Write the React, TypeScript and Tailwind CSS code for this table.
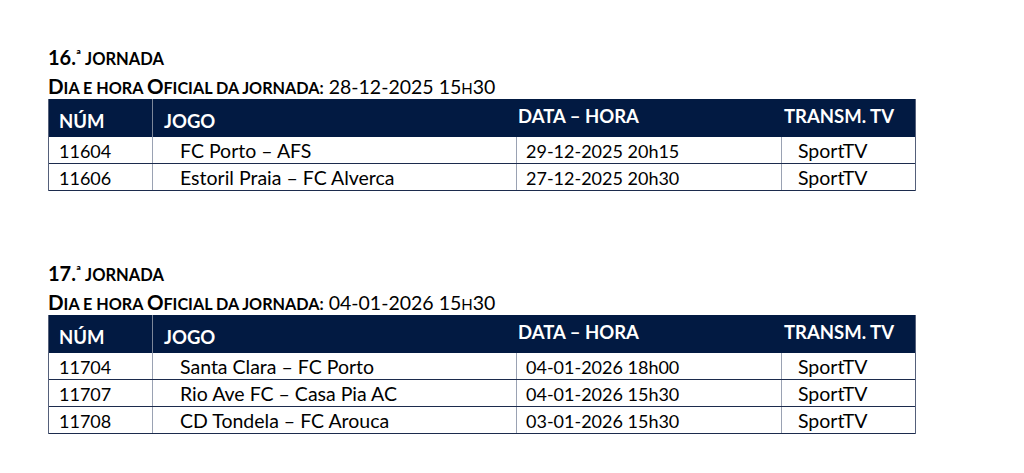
import React from "react";

type Row = { num: string; jogo: string; data: string; tv: string };

const sections: { n: string; date: string; time: [string, string]; rows: Row[] }[] = [
  {
    n: "16.",
    date: "28-12-2025",
    time: ["15", "30"],
    rows: [
      { num: "11604", jogo: "FC Porto – AFS", data: "29-12-2025 20h15", tv: "SportTV" },
      { num: "11606", jogo: "Estoril Praia – FC Alverca", data: "27-12-2025 20h30", tv: "SportTV" },
    ],
  },
  {
    n: "17.",
    date: "04-01-2026",
    time: ["15", "30"],
    rows: [
      { num: "11704", jogo: "Santa Clara – FC Porto", data: "04-01-2026 18h00", tv: "SportTV" },
      { num: "11707", jogo: "Rio Ave FC – Casa Pia AC", data: "04-01-2026 15h30", tv: "SportTV" },
      { num: "11708", jogo: "CD Tondela – FC Arouca", data: "03-01-2026 15h30", tv: "SportTV" },
    ],
  },
];

function Section({ s, first }: { s: (typeof sections)[number]; first: boolean }) {
  return (
    <div className={first ? "" : "mt-[70px]"}>
      <div className="h-[24px] leading-[24px] font-bold text-black whitespace-nowrap">
        <span className="text-[20px]">{s.n}</span>
        <span className="text-[14px] relative top-[-5px]">ª</span>
        <span className="text-[16.5px] ml-[4px]">JORNADA</span>
      </div>
      <div className="h-[30px] leading-[34px] text-black whitespace-nowrap">
        <span className="font-bold text-[20.5px]">D</span>
        <span className="font-bold text-[16.2px]">IA E HORA </span>
        <span className="font-bold text-[20.5px]">O</span>
        <span className="font-bold text-[16.2px]">FICIAL DA JORNADA:</span>
        <span className="text-[19.5px] ml-[5px]">{s.date} {s.time[0]}</span>
        <span className="text-[15px]">H</span>
        <span className="text-[19.5px]">{s.time[1]}</span>
      </div>
      <div className="w-[868px] border-l border-r border-[#55607a]">
        <div className="flex h-[38px] bg-[#021a42] text-white font-bold text-[18.5px]">
          <div className="w-[104px] border-r border-[#7d8799] pl-[10px] pt-[12px] leading-[20px]">NÚM</div>
          <div className="w-[364px] pl-[11px] pt-[12px] leading-[20px]">JOGO</div>
          <div className="w-[265px] pl-[1px] pt-[7px] leading-[20px]">DATA – HORA</div>
          <div className="flex-1 pl-[2px] pt-[7px] leading-[20px]">TRANSM. TV</div>
        </div>
        {s.rows.map((r) => (
          <div key={r.num} className="flex h-[27px] border-b border-[#1c2b4d] leading-[28px] text-black overflow-hidden">
            <div className="w-[104px] border-r border-[#9aa2b3] pl-[10px] text-[18px]">{r.num}</div>
            <div className="w-[364px] border-r border-[#9aa2b3] pl-[27px] text-[19.5px]">{r.jogo}</div>
            <div className="w-[265px] border-r border-[#9aa2b3] pl-[9px] text-[18px]">{r.data}</div>
            <div className="flex-1 pl-[16px] text-[19.5px]">{r.tv}</div>
          </div>
        ))}
      </div>
    </div>
  );
}

export default function App() {
  return (
    <div className="w-[1024px] h-[473px] bg-white overflow-hidden pl-[48px] pt-[45px] font-['Lato',sans-serif]">
      {sections.map((s, i) => (
        <Section key={i} s={s} first={i === 0} />
      ))}
    </div>
  );
}
